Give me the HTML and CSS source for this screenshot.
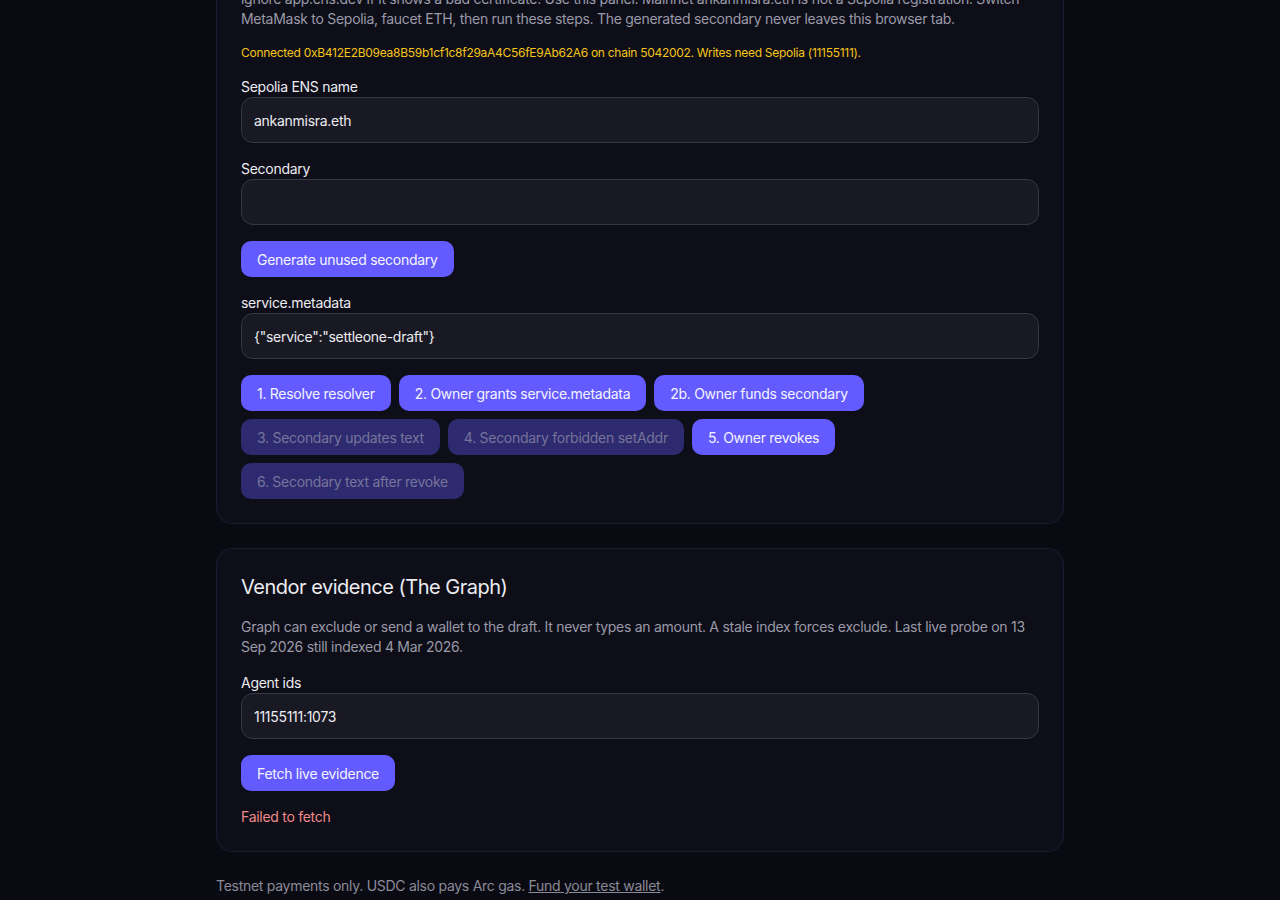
FILE: index.html
```html
<!DOCTYPE html>
<html lang="en">

<head>
    <meta charset="UTF-8">
    <meta name="viewport" content="width=device-width, initial-scale=1.0">
    <title>SettleOne Draft</title>
    <link rel="stylesheet" href="styles.css">
</head>

<body>

    <main class="page">

        <section class="card card-top">
            <h2>ENS secondary drill (Sepolia)</h2>
            <p class="muted">
                Owner grants a scoped secondary on the Sepolia resolver, then revokes it. Please<br>
                ignore app.ens.dev if it shows a bad certificate. Use this panel. Mainnet ankanmisra.eth is not a Sepolia registration. Switch
                MetaMask to Sepolia, faucet ETH, then run these steps. The generated secondary never leaves this browser tab.
            </p>

            <p class="warn">Connected 0xB412E2B09ea8B59b1cf1c8f29aA4C56fE9Ab62A6 on chain 5042002. Writes need Sepolia (11155111).</p>

            <div class="field">
                <label for="ensName">Sepolia ENS name</label>
                <input type="text" id="ensName" value="ankanmisra.eth">
            </div>

            <div class="field">
                <label for="secondary">Secondary</label>
                <input type="text" id="secondary" value="">
            </div>

            <div class="actions">
                <button type="button">Generate unused secondary</button>
            </div>

            <div class="field">
                <label for="metadata">service.metadata</label>
                <input type="text" id="metadata" value='{"service":"settleone-draft"}'>
            </div>

            <div class="actions">
                <button type="button">1. Resolve resolver</button>
                <button type="button">2. Owner grants service.metadata</button>
                <button type="button">2b. Owner funds secondary</button>
                <button type="button" disabled>3. Secondary updates text</button>
                <button type="button" disabled>4. Secondary forbidden setAddr</button>
                <button type="button">5. Owner revokes</button>
                <button type="button" disabled>6. Secondary text after revoke</button>
            </div>
        </section>

        <section class="card">
            <h2>Vendor evidence (The Graph)</h2>
            <p class="muted">Graph can exclude or send a wallet to the draft. It never types an amount. A stale index forces exclude. Last live probe on 13 Sep 2026 still indexed 4 Mar 2026.</p>

            <div class="field">
                <label for="agentIds">Agent ids</label>
                <input type="text" id="agentIds" value="11155111:1073">
            </div>

            <div class="actions">
                <button type="button">Fetch live evidence</button>
            </div>

            <p class="error">Failed to fetch</p>
        </section>

        <footer>
            Testnet payments only. USDC also pays Arc gas. <a href="#">Fund your test wallet</a>.
        </footer>

    </main>

</body>

</html>
```

FILE: styles.css
```css
body {
    font-family: Inter, "Noto Sans", sans-serif;
    font-size: 14px;
    line-height: 20px;
    letter-spacing: -0.02em;
    background-color: #0a0a12;
    color: #ececf1;
    margin: 0;
    padding: 0;
}

.page {
    max-width: 848px;
    margin: 0 auto;
    padding-bottom: 40px;
}

.card {
    background-color: #0e0e18;
    border: 1px solid #1e1c34;
    border-radius: 16px;
    padding: 24px;
    margin-bottom: 24px;
    display: flex;
    flex-direction: column;
    gap: 16px;
}

.card-top {
    margin-top: -100px;
}

h2 {
    font-size: 20px;
    line-height: 28px;
    font-weight: 400;
    letter-spacing: -0.025em;
    margin: 0;
}

p {
    margin: 0;
}

.muted {
    color: #9a9aa8;
}

.warn {
    color: #f5c518;
    font-size: 12px;
    line-height: 16px;
}

.error {
    color: #f08a8a;
}

.field {
    display: flex;
    flex-direction: column;
}

label {
    line-height: 20px;
    color: #ececf1;
}

input {
    height: 46px;
    box-sizing: border-box;
    padding: 0 12px;
    background-color: #191923;
    border: 1px solid #383842;
    border-radius: 12px;
    color: #ececf1;
    font-family: inherit;
    font-size: 14px;
    letter-spacing: inherit;
    outline: none;
}

.actions {
    display: flex;
    flex-wrap: wrap;
    gap: 8px;
}

button {
    height: 36px;
    background-color: #635bff;
    color: #f4f4ff;
    padding: 0 16px;
    border: none;
    border-radius: 10px;
    font-family: inherit;
    font-size: 14px;
    letter-spacing: inherit;
    cursor: pointer;
}

button:disabled {
    background-color: #2e2a70;
    color: #76749a;
    cursor: default;
}

footer {
    color: #8a8a98;
}

footer a {
    color: #8a8a98;
}
```
